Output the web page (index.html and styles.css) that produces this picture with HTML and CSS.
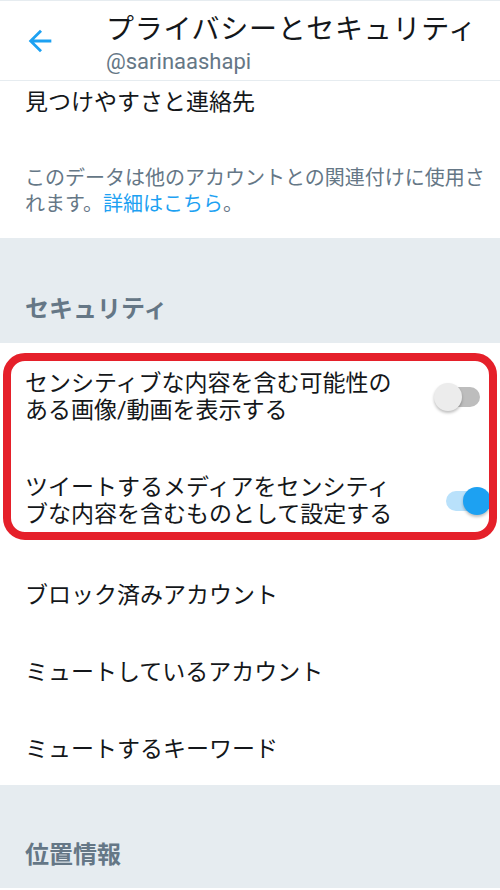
FILE: index.html
```html
<!DOCTYPE html>
<html lang="ja">

<head>
    <meta charset="UTF-8">
    <meta name="viewport" content="width=device-width, initial-scale=1.0">
    <title>プライバシーとセキュリティ</title>
    <link rel="stylesheet" href="styles.css">
</head>

<body>
    <div class="header">
        <svg class="back" viewBox="0 0 24 24" width="34" height="34">
            <path d="M20 11H7.83l5.59-5.59L12 4l-8 8 8 8 1.41-1.41L7.83 13H20v-2z" fill="#1da1f2"/>
        </svg>
        <div class="header-text">
            <div class="title">プライバシーとセキュリティ</div>
            <div class="handle">@sarinaashapi</div>
        </div>
    </div>

    <div class="row-top">見つけやすさと連絡先</div>
    <p class="note">このデータは他のアカウントとの関連付けに使用されます。<a href="#">詳細はこちら</a>。</p>

    <div class="section">セキュリティ</div>

    <div class="highlight">
        <div class="toggle-row">
            <div class="toggle-text">センシティブな内容を含む可能性のある画像/動画を表示する</div>
            <div class="switch"><span class="track"></span><span class="thumb"></span></div>
        </div>
        <div class="toggle-row second">
            <div class="toggle-text">ツイートするメディアをセンシティブな内容を含むものとして設定する</div>
            <div class="switch on"><span class="track"></span><span class="thumb"></span></div>
        </div>
    </div>

    <div class="list">
        <div class="item">ブロック済みアカウント</div>
        <div class="item">ミュートしているアカウント</div>
        <div class="item">ミュートするキーワード</div>
    </div>

    <div class="section location">位置情報</div>
</body>

</html>
```

FILE: styles.css
```css
* {
    box-sizing: border-box;
}

body {
    margin: 0;
    width: 500px;
    background: #fff;
    color: #14171a;
    font-family: Roboto, "Noto Sans CJK JP", sans-serif;
}

.header {
    display: flex;
    align-items: flex-start;
    padding: 12px 0 5px 23px;
    border-top: 1px solid #e6ecf0;
    border-bottom: 1px solid #e6ecf0;
}

.back {
    display: block;
    margin-top: 11px;
}

.header-text {
    margin-left: 49px;
}

.title {
    font-size: 28px;
    line-height: 34px;
    letter-spacing: 0.7px;
    white-space: nowrap;
}

.handle {
    margin-top: 2px;
    font-size: 22px;
    line-height: 26px;
    color: #657786;
}

.row-top {
    padding: 8px 25px 0;
    font-size: 23px;
    line-height: 28px;
}

.note {
    margin: 48px 0 0;
    padding: 0 12px 21px 25px;
    font-size: 20px;
    line-height: 26px;
    color: #657786;
}

.note a {
    color: #1da1f2;
    text-decoration: none;
}

.section {
    background: #e6ecf0;
    padding: 56px 25px 19px;
    font-size: 24px;
    line-height: 30px;
    font-weight: 700;
    color: #657786;
}

.section.location {
    padding: 55px 25px 18px;
}

.highlight {
    margin: 10px 3px 0;
    border: 8px solid #e5202a;
    border-radius: 22px;
    overflow: hidden;
    padding: 9px 0 4px 14px;
}

.toggle-row {
    display: flex;
    align-items: center;
}

.toggle-row.second {
    margin-top: 50px;
}

.toggle-text {
    width: 380px;
    font-size: 23px;
    line-height: 27px;
}

.switch {
    position: relative;
    width: 58px;
    height: 30px;
    margin-left: auto;
    margin-right: -3px;
}

.track {
    position: absolute;
    top: 5px;
    left: 2px;
    width: 44px;
    height: 20px;
    border-radius: 10px;
    background: #bdbdbd;
}

.thumb {
    position: absolute;
    top: 1px;
    left: 0;
    width: 28px;
    height: 28px;
    border-radius: 50%;
    background: #ececec;
    box-shadow: 0 2px 3px rgba(0, 0, 0, 0.25);
}

.switch.on .track {
    left: 12px;
    background: #b9e1fb;
}

.switch.on .thumb {
    left: 29px;
    background: #1da1f2;
}

.list {
    margin-top: 14px;
}

.item {
    display: flex;
    align-items: center;
    height: 77px;
    padding: 0 25px;
    font-size: 23px;
}
```
